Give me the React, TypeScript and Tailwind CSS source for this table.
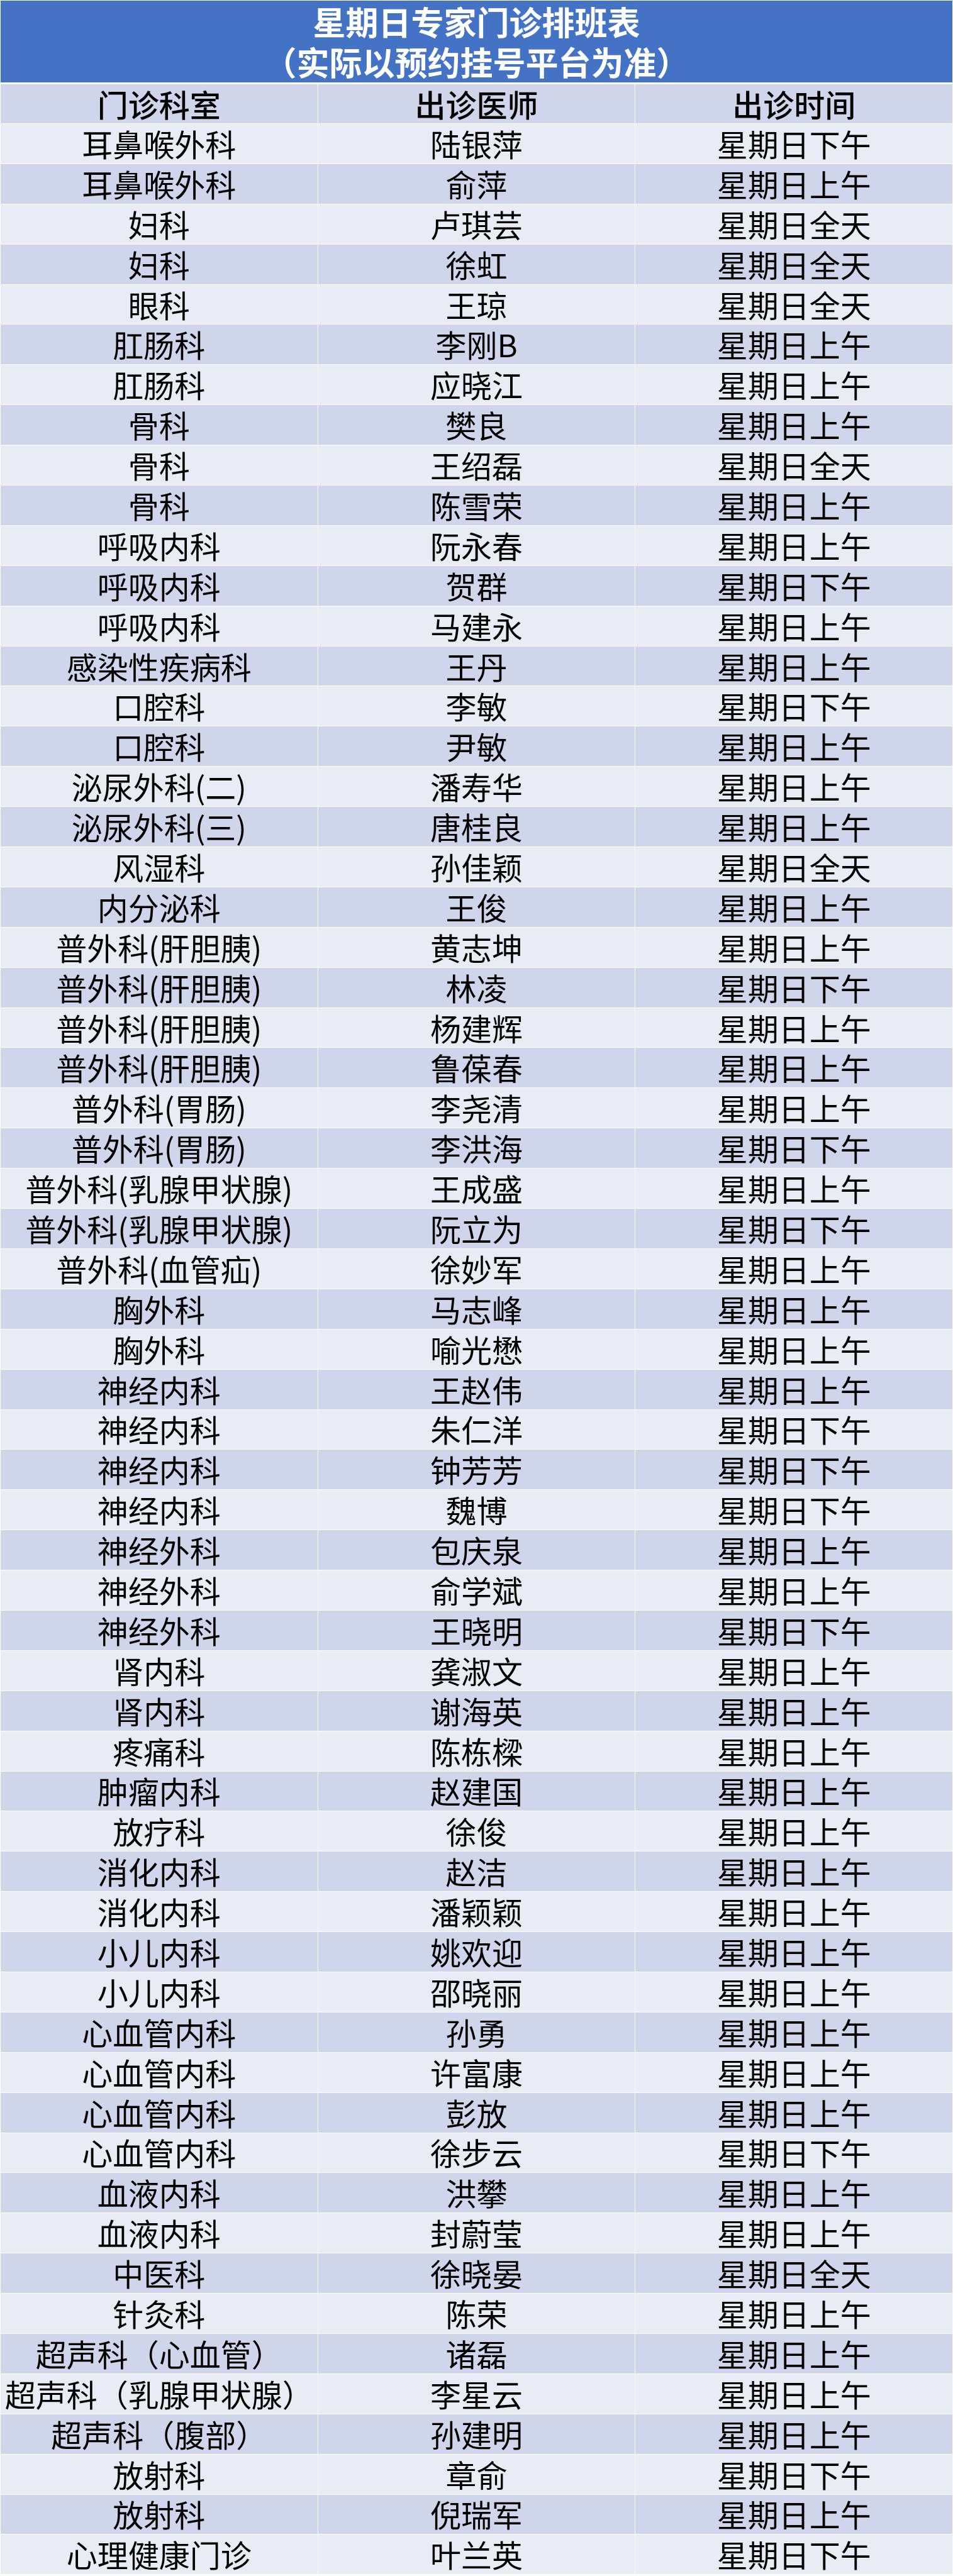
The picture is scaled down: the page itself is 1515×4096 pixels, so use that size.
import * as React from "react";

/** Sunday expert clinic roster — a three-column banded table under a blue title band. */

type Row = [dept: string, doctor: string, time: string];

const ROWS: Row[] = [
  ["耳鼻喉外科", "陆银萍", "星期日下午"],
  ["耳鼻喉外科", "俞萍", "星期日上午"],
  ["妇科", "卢琪芸", "星期日全天"],
  ["妇科", "徐虹", "星期日全天"],
  ["眼科", "王琼", "星期日全天"],
  ["肛肠科", "李刚B", "星期日上午"],
  ["肛肠科", "应晓江", "星期日上午"],
  ["骨科", "樊良", "星期日上午"],
  ["骨科", "王绍磊", "星期日全天"],
  ["骨科", "陈雪荣", "星期日上午"],
  ["呼吸内科", "阮永春", "星期日上午"],
  ["呼吸内科", "贺群", "星期日下午"],
  ["呼吸内科", "马建永", "星期日上午"],
  ["感染性疾病科", "王丹", "星期日上午"],
  ["口腔科", "李敏", "星期日下午"],
  ["口腔科", "尹敏", "星期日上午"],
  ["泌尿外科(二)", "潘寿华", "星期日上午"],
  ["泌尿外科(三)", "唐桂良", "星期日上午"],
  ["风湿科", "孙佳颖", "星期日全天"],
  ["内分泌科", "王俊", "星期日上午"],
  ["普外科(肝胆胰)", "黄志坤", "星期日上午"],
  ["普外科(肝胆胰)", "林凌", "星期日下午"],
  ["普外科(肝胆胰)", "杨建辉", "星期日上午"],
  ["普外科(肝胆胰)", "鲁葆春", "星期日上午"],
  ["普外科(胃肠)", "李尧清", "星期日上午"],
  ["普外科(胃肠)", "李洪海", "星期日下午"],
  ["普外科(乳腺甲状腺)", "王成盛", "星期日上午"],
  ["普外科(乳腺甲状腺)", "阮立为", "星期日下午"],
  ["普外科(血管疝)", "徐妙军", "星期日上午"],
  ["胸外科", "马志峰", "星期日上午"],
  ["胸外科", "喻光懋", "星期日上午"],
  ["神经内科", "王赵伟", "星期日上午"],
  ["神经内科", "朱仁洋", "星期日下午"],
  ["神经内科", "钟芳芳", "星期日下午"],
  ["神经内科", "魏博", "星期日下午"],
  ["神经外科", "包庆泉", "星期日上午"],
  ["神经外科", "俞学斌", "星期日上午"],
  ["神经外科", "王晓明", "星期日下午"],
  ["肾内科", "龚淑文", "星期日上午"],
  ["肾内科", "谢海英", "星期日上午"],
  ["疼痛科", "陈栋樑", "星期日上午"],
  ["肿瘤内科", "赵建国", "星期日上午"],
  ["放疗科", "徐俊", "星期日上午"],
  ["消化内科", "赵洁", "星期日上午"],
  ["消化内科", "潘颖颖", "星期日上午"],
  ["小儿内科", "姚欢迎", "星期日上午"],
  ["小儿内科", "邵晓丽", "星期日上午"],
  ["心血管内科", "孙勇", "星期日上午"],
  ["心血管内科", "许富康", "星期日上午"],
  ["心血管内科", "彭放", "星期日上午"],
  ["心血管内科", "徐步云", "星期日下午"],
  ["血液内科", "洪攀", "星期日上午"],
  ["血液内科", "封蔚莹", "星期日上午"],
  ["中医科", "徐晓晏", "星期日全天"],
  ["针灸科", "陈荣", "星期日上午"],
  ["超声科（心血管）", "诸磊", "星期日上午"],
  ["超声科（乳腺甲状腺）", "李星云", "星期日上午"],
  ["超声科（腹部）", "孙建明", "星期日上午"],
  ["放射科", "章俞", "星期日下午"],
  ["放射科", "倪瑞军", "星期日上午"],
  ["心理健康门诊", "叶兰英", "星期日下午"],
];

function Cell({ children, dark, head }: { children: React.ReactNode; dark: boolean; head?: boolean }) {
  return (
    <div
      className={`flex items-center justify-center whitespace-nowrap pb-[2px] text-[49px] leading-none text-black ${
        head ? "h-[62px] font-medium" : "h-[62.9px]"
      } ${dark ? "bg-[#CFD5EA]" : "bg-[#E9EBF5]"}`}
    >
      {children}
    </div>
  );
}

export default function App() {
  return (
    <div
      className="w-[1515px] bg-white pb-[2px]"
      style={{ fontFamily: '"Noto Sans CJK SC", "Noto Sans", sans-serif' }}
    >
      {/* title band */}
      <div className="mx-px mt-px flex h-[130px] flex-col items-center justify-center bg-[#4472C4] text-[52px] font-bold leading-[64px] text-white">
        <div>星期日专家门诊排班表</div>
        <div>（实际以预约挂号平台为准）</div>
      </div>

      <div className="mx-px mt-[3px] grid grid-cols-3 gap-px bg-white">
        <Cell dark head>门诊科室</Cell>
        <Cell dark head>出诊医师</Cell>
        <Cell dark head>出诊时间</Cell>
        {ROWS.map((r, i) => {
          const dark = i % 2 === 1;
          return (
            <React.Fragment key={i}>
              <Cell dark={dark}>{r[0]}</Cell>
              <Cell dark={dark}>{r[1]}</Cell>
              <Cell dark={dark}>{r[2]}</Cell>
            </React.Fragment>
          );
        })}
      </div>
    </div>
  );
}
